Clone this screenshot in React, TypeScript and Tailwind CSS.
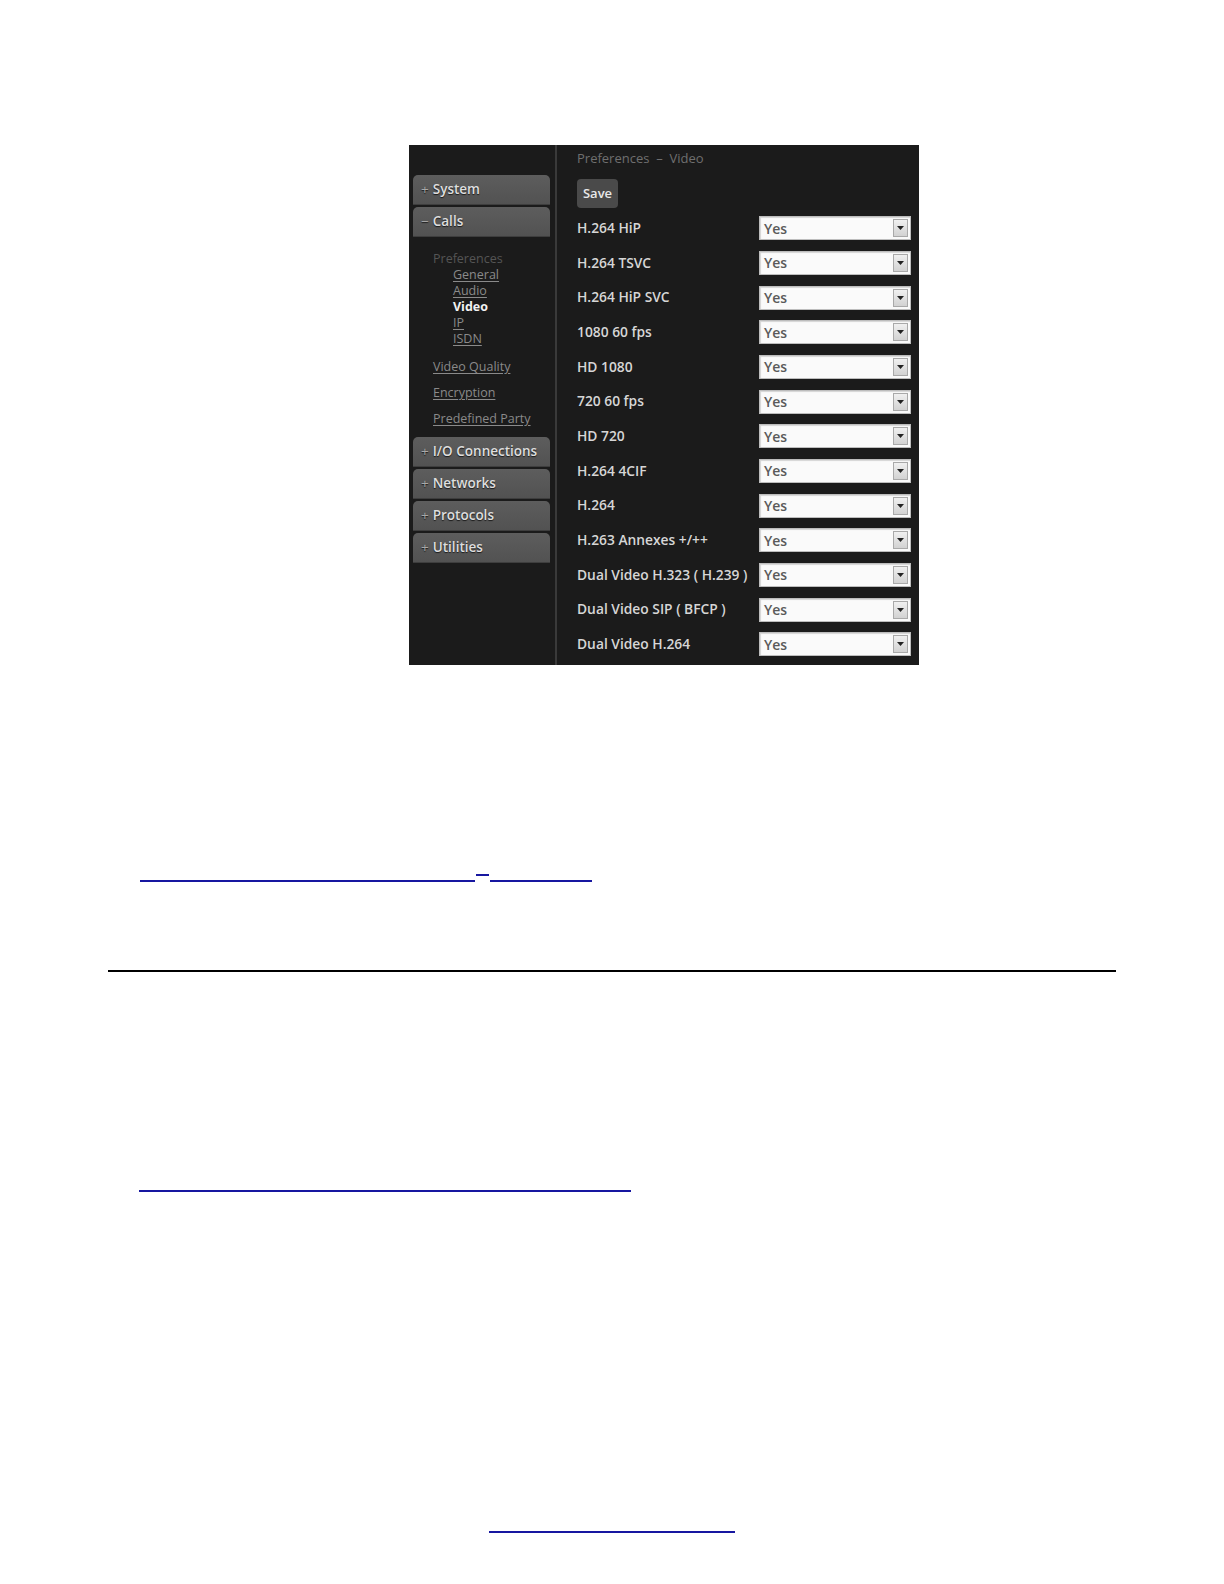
import React from 'react';

const rows = [
  'H.264 HiP',
  'H.264 TSVC',
  'H.264 HiP SVC',
  '1080 60 fps',
  'HD 1080',
  '720 60 fps',
  'HD 720',
  'H.264 4CIF',
  'H.264',
  'H.263 Annexes +/++',
  'Dual Video H.323 ( H.239 )',
  'Dual Video SIP ( BFCP )',
  'Dual Video H.264',
];

const font = { fontFamily: '"Open Sans", "Noto Sans", sans-serif' };

const MenuButton = ({ sign, label }: { sign: string; label: string }) => (
  <div className="flex h-[30px] items-center rounded-t-[5px] border-b border-[#3e3e3e] bg-gradient-to-b from-[#5d5d5d] to-[#525252] pl-[8px] text-[13.5px] font-semibold text-[#dedede] [text-shadow:0_1px_1px_rgba(0,0,0,0.7)]">
    <span className="mr-[4px] font-normal text-[#a8a8a8]">{sign}</span>
    {label}
  </div>
);

const SubLink = ({ label, active }: { label: string; active?: boolean }) =>
  active ? (
    <div className="text-[12.5px] font-bold leading-[16px] text-[#f2f2f2]">{label}</div>
  ) : (
    <div className="text-[12.5px] leading-[16px] text-[#8a8a8a] underline underline-offset-2">{label}</div>
  );

const Select = () => (
  <div className="flex h-[24px] w-[152px] items-center border border-[#bdbdbd] bg-[#fafafa] shadow-[inset_1px_1px_1px_rgba(0,0,0,0.15)]">
    <span className="flex-1 pl-[4px] text-[14px] font-semibold text-[#5a5a5a]">Yes</span>
    <span className="mr-[2px] flex h-[18px] w-[15px] items-center justify-center border border-[#a9a9a9] bg-gradient-to-b from-[#f0f0f0] to-[#d2d2d2]">
      <svg width="7" height="4" viewBox="0 0 7 4">
        <path d="M0 0h7L3.5 4z" fill="#222" />
      </svg>
    </span>
  </div>
);

const PreferencesShot = () => (
  <div className="flex h-[520px] w-[510px] bg-[#1b1b1b]" style={font}>
    <div className="w-[146px] shrink-0 pl-[4px] pr-[5px] pt-[30px]">
      <MenuButton sign="+" label="System" />
      <div className="mt-[2px]">
        <MenuButton sign="−" label="Calls" />
      </div>
      <div className="pl-[20px] pt-[14px]">
        <div className="text-[12.5px] leading-[16px] text-[#555]">Preferences</div>
        <div className="pl-[20px]">
          <SubLink label="General" />
          <SubLink label="Audio" />
          <SubLink label="Video" active />
          <SubLink label="IP" />
          <SubLink label="ISDN" />
        </div>
        <div className="mt-[12px]">
          <SubLink label="Video Quality" />
        </div>
        <div className="mt-[10px]">
          <SubLink label="Encryption" />
        </div>
        <div className="mt-[10px]">
          <SubLink label="Predefined Party" />
        </div>
      </div>
      <div className="mt-[10px] flex flex-col gap-[2px]">
        <MenuButton sign="+" label="I/O Connections" />
        <MenuButton sign="+" label="Networks" />
        <MenuButton sign="+" label="Protocols" />
        <MenuButton sign="+" label="Utilities" />
      </div>
    </div>
    <div className="w-[2px] shrink-0 bg-[#3a3a3a]" />
    <div className="flex-1 pl-[20px] pt-[6px]">
      <div className="text-[13px] leading-[14px] text-[#6f6f6f]">Preferences &nbsp;–&nbsp; Video</div>
      <div className="mt-[14px] flex h-[29px] w-[41px] items-center justify-center rounded-[4px] bg-[#4a4a4a] text-[13px] font-semibold text-[#e8e8e8]">
        Save
      </div>
      <div className="mt-[3px]">
        {rows.map((r) => (
          <div key={r} className="flex h-[34.67px] items-center">
            <span className="w-[182px] shrink-0 text-[13.8px] font-semibold text-[#d6d6d6]">{r}</span>
            <Select />
          </div>
        ))}
      </div>
    </div>
  </div>
);

export default function App() {
  return (
    <div className="relative h-[1584px] w-[1224px] overflow-hidden bg-white">
      <div className="pl-[409px] pt-[145px]">
        <PreferencesShot />
      </div>
      <div className="ml-[140px] mt-[209px] flex items-start">
        <span className="mt-[6px] h-[2px] w-[335px] bg-[#1717a0]" />
        <span className="ml-[1px] h-[2px] w-[13px] bg-[#1717a0]" />
        <span className="ml-[1px] mt-[6px] h-[2px] w-[102px] bg-[#1717a0]" />
      </div>
      <div className="ml-[108px] mt-[88px] h-[2px] w-[1008px] bg-black" />
      <div className="ml-[139px] mt-[218px] h-[2px] w-[492px] bg-[#1717a0]" />
      <div className="ml-[489px] mt-[339px] h-[2px] w-[246px] bg-[#1717a0]" />
    </div>
  );
}
